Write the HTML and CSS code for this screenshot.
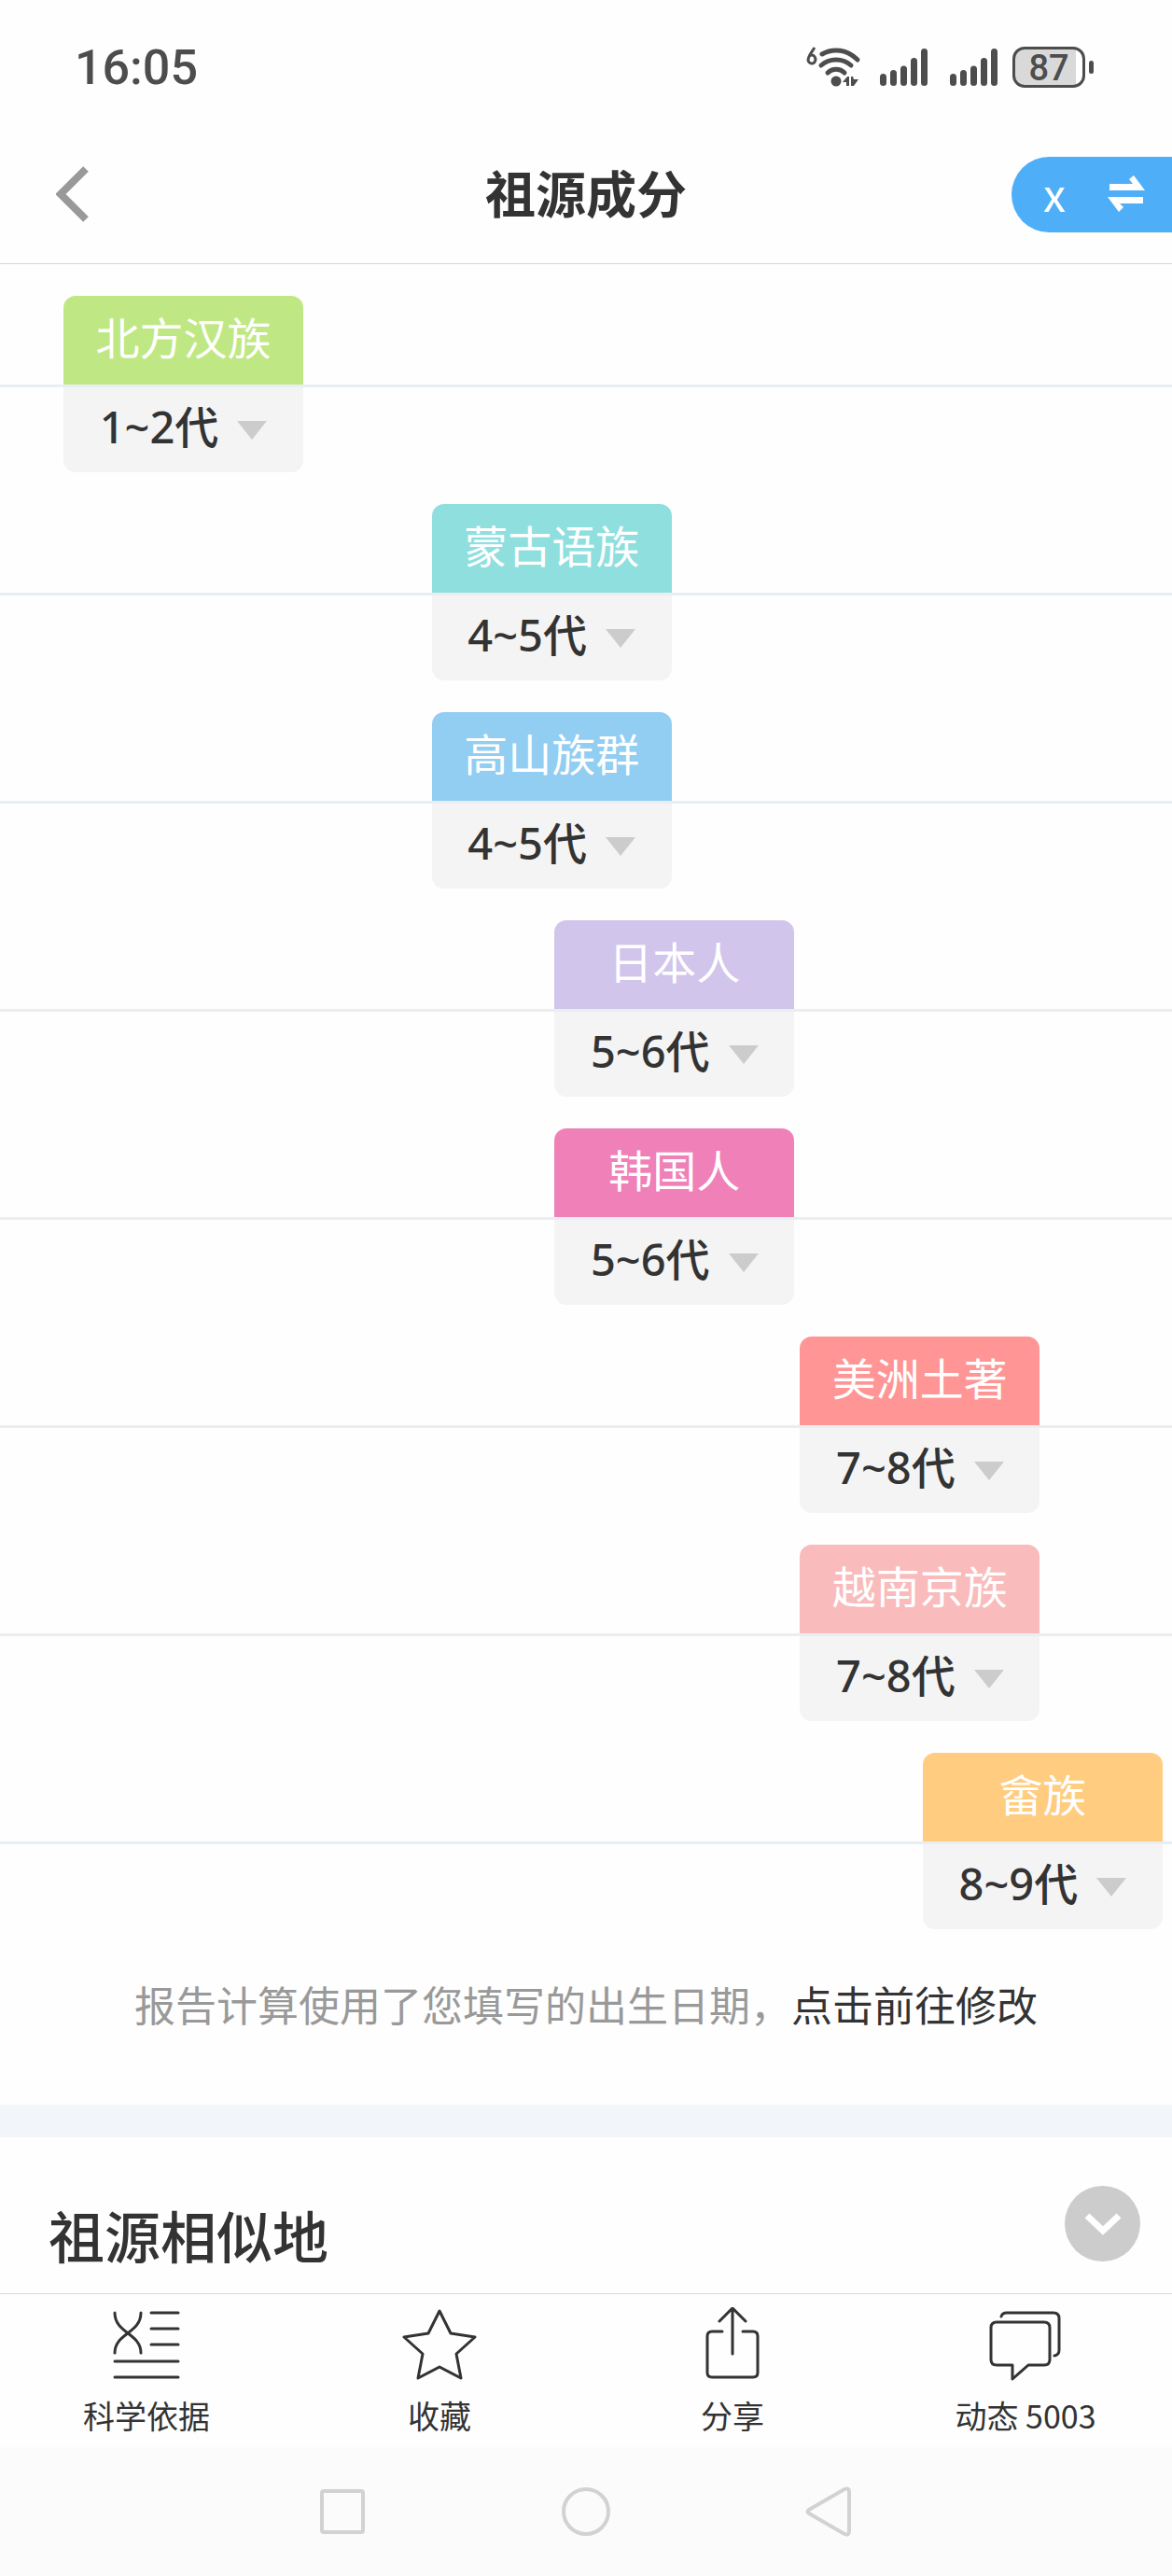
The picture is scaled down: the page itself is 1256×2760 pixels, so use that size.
FILE: index.html
```html
<!DOCTYPE html>
<html lang="zh-CN">
<head>
    <meta charset="UTF-8">
    <meta name="viewport" content="width=device-width, initial-scale=1.0">
    <title>祖源成分</title>
    <link rel="stylesheet" href="styles.css">
</head>
<body>
    <div class="status-bar">
        <span class="time">16:05</span>
        <div class="status-icons">
            <svg class="wifi" width="60" height="44" viewBox="0 0 60 44">
                <path d="M9 1C5 7 2 10 2 14.500a4 4.500 0 1 0 1-4" fill="none" stroke="#4d4d4d" stroke-width="3"/>
                <g fill="none" stroke="#4d4d4d" stroke-width="5" stroke-linecap="round">
                    <path d="M17 8C29 1 44 3 55 14"/>
                    <path d="M16 20C25 12 39 12 48 20"/>
                    <path d="M23 28C28 23 36 23 41 28"/>
                </g>
                <circle cx="32" cy="37" r="5.500" fill="#4d4d4d"/>
                <path d="M39 38l5-6h2v10h-3v-4zM48 32h2l1 3h5l-5 7h-3z" fill="#4d4d4d"/>
            </svg>
            <svg class="signal" width="51" height="44" viewBox="0 0 51 44">
                <path d="M3.500 32.500v6M14.500 28.500v10M25.500 24v14.500M36.500 15.500v23M47.500 5.500v33" stroke="#4d4d4d" stroke-width="7" stroke-linecap="round"/>
            </svg>
            <svg class="signal" width="51" height="44" viewBox="0 0 51 44">
                <path d="M3.500 32.500v6M14.500 28.500v10M25.500 24v14.500M36.500 15.500v23M47.500 5.500v33" stroke="#4d4d4d" stroke-width="7" stroke-linecap="round"/>
            </svg>
            <div class="battery"><span>87</span></div>
        </div>
    </div>

    <header class="header">
        <button class="back" aria-label="返回">
            <svg width="36" height="60" viewBox="0 0 36 60">
                <path d="M32 3L5 30l27 27" fill="none" stroke="#999" stroke-width="8"/>
            </svg>
        </button>
        <h1>祖源成分</h1>
        <button class="switch">
            <span>x</span>
            <svg width="40" height="40" viewBox="0 0 40 40">
                <path d="M2 9h25l-4-5 5-4 12 16H2zM38 30H13l4 4-5 5L0 23h38z" fill="#fff"/>
            </svg>
        </button>
    </header>

    <main>
        <section class="timeline">
            <div class="row">
                <div class="card gen-1">
                    <div class="name green">北方汉族</div>
                    <button class="range">1~2代<i class="arrow"></i></button>
                </div>
            </div>
            <div class="row">
                <div class="card gen-4">
                    <div class="name teal">蒙古语族</div>
                    <button class="range">4~5代<i class="arrow"></i></button>
                </div>
            </div>
            <div class="row">
                <div class="card gen-4">
                    <div class="name blue">高山族群</div>
                    <button class="range">4~5代<i class="arrow"></i></button>
                </div>
            </div>
            <div class="row">
                <div class="card gen-5">
                    <div class="name purple">日本人</div>
                    <button class="range">5~6代<i class="arrow"></i></button>
                </div>
            </div>
            <div class="row">
                <div class="card gen-5">
                    <div class="name pink">韩国人</div>
                    <button class="range">5~6代<i class="arrow"></i></button>
                </div>
            </div>
            <div class="row">
                <div class="card gen-7">
                    <div class="name red">美洲土著</div>
                    <button class="range">7~8代<i class="arrow"></i></button>
                </div>
            </div>
            <div class="row">
                <div class="card gen-7">
                    <div class="name rose">越南京族</div>
                    <button class="range">7~8代<i class="arrow"></i></button>
                </div>
            </div>
            <div class="row">
                <div class="card gen-8">
                    <div class="name orange">畲族</div>
                    <button class="range">8~9代<i class="arrow"></i></button>
                </div>
            </div>
        </section>
        <p class="hint">报告计算使用了您填写的出生日期，<a href="#">点击前往修改</a></p>

        <section class="similar">
            <h2>祖源相似地</h2>
            <button class="expand" aria-label="展开">
                <svg width="40" height="24" viewBox="0 0 40 24">
                    <path d="M3 3l17 16L37 3" fill="none" stroke="#fff" stroke-width="7"/>
                </svg>
            </button>
        </section>
    </main>

    <nav class="tabs">
        <a href="#">
            <svg width="80" height="80" viewBox="0 0 80 80">
                <path d="M6 6c0 22 28 22 28 43M34 6c0 22-28 22-28 43M45 6h29M45 23h29M45 40h29M6 58h68M6 75h68"/>
            </svg>
            <span>科学依据</span>
        </a>
        <a href="#">
            <svg width="80" height="80" viewBox="0 0 80 80">
                <path d="M40 4l12 24 26 4-20 18 5 26-23-12-23 12 5-26L2 32l26-4z"/>
            </svg>
            <span>收藏</span>
        </a>
        <a href="#">
            <svg width="80" height="80" viewBox="0 0 80 80">
                <path d="M40 50V2M26 15L40 1l14 14M29 26H18q-5 0-5 5v39q0 5 5 5h44q5 0 5-5V31q0-5-5-5H51"/>
            </svg>
            <span>分享</span>
        </a>
        <a href="#">
            <svg width="80" height="80" viewBox="0 0 80 80">
                <path d="M9 16h51q6 0 6 6v34q0 6-6 6H43L26 77V62H9q-6 0-6-6V22q0-6 6-6zM14 10q1-4 6-4h50q6 0 6 6v34q0 5-5 6"/>
            </svg>
            <span>动态 5003</span>
        </a>
    </nav>

    <div class="system-nav">
        <button aria-label="最近任务">
            <svg width="54" height="54" viewBox="0 0 54 54"><rect x="5" y="5" width="44" height="44" rx="2"/></svg>
        </button>
        <button aria-label="主屏幕">
            <svg width="54" height="54" viewBox="0 0 54 54"><circle cx="27" cy="27" r="24"/></svg>
        </button>
        <button aria-label="返回上一页">
            <svg width="54" height="54" viewBox="0 0 54 54"><path d="M5 25L43 3q5-2 5 3v42q0 5-5 3L5 29q-3-2 0-4z"/></svg>
        </button>
    </div>
</body>
</html>
```
FILE: styles.css
```css
* {
    box-sizing: border-box;
}

body {
    margin: 0;
    background-color: #fefefe;
    color: #333;
    font-family: "Noto Sans CJK SC", sans-serif;
}

button {
    padding: 0;
    border: none;
    background: none;
    color: inherit;
    font-family: inherit;
    cursor: pointer;
}

a {
    color: inherit;
    text-decoration: none;
}

svg {
    display: block;
}

/* status bar */
.status-bar {
    display: flex;
    justify-content: space-between;
    align-items: center;
    height: 134px;
    padding: 12px 84px 0 80px;
    color: #4d4d4d;
    font-family: Roboto, sans-serif;
}

.time {
    font-size: 52px;
    font-weight: 500;
    line-height: 72px;
}

.status-icons {
    display: flex;
    align-items: center;
    margin-bottom: 2px;
}

.wifi {
    margin-right: 19px;
}

.signal {
    margin-right: 24px;
}

.signal + .battery {
    margin-left: -8px;
}

.battery {
    position: relative;
    width: 78px;
    height: 44px;
    margin-right: 9px;
    border: 3px solid #4d4d4d;
    border-radius: 13px;
    background: linear-gradient(to right, #d9d9d9 90%, #fff 90%);
    font-size: 38px;
    font-weight: 500;
    line-height: 40px;
    text-align: center;
}

.battery::after {
    content: "";
    position: absolute;
    top: 12px;
    right: -12px;
    width: 5px;
    height: 14px;
    border-radius: 3px;
    background-color: #4d4d4d;
}

/* title bar */
.header {
    display: grid;
    grid-template-columns: 1fr auto 1fr;
    align-items: center;
    height: 149px;
    border-bottom: 1px solid #d8d8d8;
}

.back {
    justify-self: start;
    margin-left: 60px;
}

h1 {
    margin: 0;
    padding-bottom: 4px;
    font-size: 54px;
    font-weight: 700;
    line-height: 72px;
}

.switch {
    display: flex;
    justify-self: end;
    align-items: center;
    justify-content: space-between;
    width: 172px;
    height: 81px;
    padding: 0 29px 0 34px;
    border-radius: 41px 0 0 41px;
    background-color: #4eaff8;
    color: #fff;
    font-size: 48px;
    line-height: 72px;
}

.switch span {
    padding-bottom: 4px;
}

/* generation timeline */
.timeline {
    display: flex;
    flex-direction: column;
    gap: 34px;
    padding-top: 34px;
}

.row {
    display: grid;
    grid-template-columns: repeat(9, 1fr);
    position: relative;
    padding: 0 4px 0 68px;
}

.row::after {
    content: "";
    position: absolute;
    top: 95px;
    left: 0;
    right: 0;
    height: 3px;
    background-color: #e9eef2;
}

.card {
    grid-column-end: span 2;
    width: 257px;
    border-radius: 13px;
    overflow: hidden;
    background-color: #f4f4f4;
}

.gen-1 { grid-column-start: 1; }
.gen-4 { grid-column-start: 4; }
.gen-5 { grid-column-start: 5; }
.gen-7 { grid-column-start: 7; }
.gen-8 { grid-column-start: 8; }

.name {
    height: 95px;
    color: #fff;
    font-size: 47px;
    line-height: 86px;
    text-align: center;
}

.green { background-color: #bfe884; }
.teal { background-color: #8fdfdf; }
.blue { background-color: #92cdf2; }
.purple { background-color: #d1c5eb; }
.pink { background-color: #ef80b8; }
.red { background-color: #ff9595; }
.rose { background-color: #f9bbbb; }
.orange { background-color: #ffcc80; }

.range {
    display: flex;
    justify-content: center;
    align-items: center;
    gap: 20px;
    width: 100%;
    height: 94px;
    padding-bottom: 4px;
    font-family: "Noto Sans", "Noto Sans CJK SC", sans-serif;
    font-size: 47px;
    font-weight: 500;
    line-height: 90px;
}

.arrow {
    margin-top: 8px;
    border: 16px solid transparent;
    border-top: 20px solid #ccc;
    border-bottom: none;
}

.hint {
    margin: 0;
    padding: 44px 0 72px;
    color: #999;
    font-size: 44px;
    line-height: 72px;
    text-align: center;
}

.hint a {
    color: #333;
}

/* next section */
.similar {
    display: flex;
    justify-content: space-between;
    align-items: flex-start;
    height: 202px;
    padding: 52px 34px 0 52px;
    border-top: 35px solid #f2f6fa;
}

h2 {
    margin: 0;
    padding-top: 16px;
    font-size: 60px;
    font-weight: 500;
    line-height: 72px;
}

.expand {
    display: flex;
    justify-content: center;
    align-items: center;
    width: 81px;
    height: 81px;
    border-radius: 50%;
    background-color: #ccc;
}

/* bottom tabs */
.tabs {
    display: grid;
    grid-template-columns: repeat(4, 1fr);
    height: 165px;
    padding-top: 14px;
    border-top: 1px solid #d8d8d8;
}

.tabs a {
    display: flex;
    flex-direction: column;
    align-items: center;
    gap: 12px;
    font-size: 34px;
    line-height: 48px;
}

.tabs path {
    fill: none;
    stroke: #333;
    stroke-width: 3;
    stroke-linecap: round;
    stroke-linejoin: round;
}

.system-nav {
    display: flex;
    justify-content: center;
    align-items: center;
    gap: 207px;
    height: 138px;
    background-color: #fbfbfb;
}

.system-nav svg {
    fill: none;
    stroke: #d2d2d2;
    stroke-width: 4;
}
```
